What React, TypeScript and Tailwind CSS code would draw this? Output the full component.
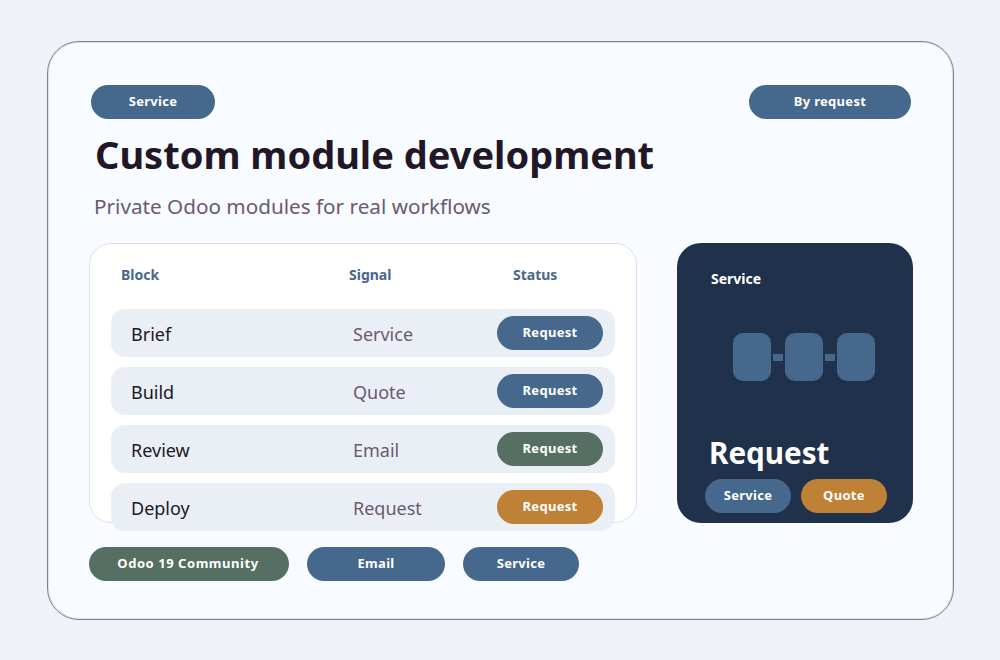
const font = "font-['Noto_Sans','Open_Sans',sans-serif]";

const rows = [
  { block: "Brief", signal: "Service", color: "bg-[#46688c]" },
  { block: "Build", signal: "Quote", color: "bg-[#46688c]" },
  { block: "Review", signal: "Email", color: "bg-[#556f62]" },
  { block: "Deploy", signal: "Request", color: "bg-[#bf8135]" },
];

const Pill = ({ label, className }: { label: string; className: string }) => (
  <div
    className={`flex h-[34px] items-center justify-center rounded-full text-[13px] font-bold tracking-[0.3px] text-white ${className}`}
  >
    {label}
  </div>
);

const App = () => {
  return (
    <div className={`h-[660px] w-[1000px] overflow-hidden bg-[#eff3f7] pt-[41px] pl-[47px] ${font}`}>
      <div className="h-[579px] w-[907px] rounded-[32px] border border-[#857d92] bg-[#f8fbff] pt-[43px] pl-[41px] shadow-[inset_0_0_0_1px_#e3dfea]">
        <div className="flex w-[822px] items-center justify-between pl-[2px]">
          <Pill label="Service" className="w-[124px] bg-[#46688c]" />
          <Pill label="By request" className="w-[162px] bg-[#46688c]" />
        </div>

        <h1 className="mt-[5px] pl-[6px] text-[38px] leading-[60px] font-bold text-[#211726]">
          Custom module development
        </h1>
        <p className="mt-[7px] pl-[5px] text-[20.7px] leading-[30px] text-[#6a5a70]">
          Private Odoo modules for real workflows
        </p>

        <div className="mt-[22px] flex gap-[40px]">
          <div className="h-[280px] w-[548px] rounded-[22px] border border-[#e3dfea] bg-white pl-[21px]">
            <div className="mb-[5px] flex h-[60px] items-center text-[14px] font-bold text-[#46688c]">
              <div className="w-[228px] pl-[10px]">Block</div>
              <div className="w-[164px] pl-[10px]">Signal</div>
              <div className="pl-[10px]">Status</div>
            </div>
            <div className="flex flex-col gap-[10px]">
              {rows.map((row) => (
                <div
                  key={row.block}
                  className="flex h-[48px] w-[504px] items-center rounded-[14px] bg-[#eaeff6] pl-[20px]"
                >
                  <div className="w-[222px] pt-[2px] text-[18px] text-[#211726]">{row.block}</div>
                  <div className="w-[144px] pt-[2px] text-[18px] text-[#6a5a70]">{row.signal}</div>
                  <Pill label="Request" className={`w-[106px] ${row.color}`} />
                </div>
              ))}
            </div>
          </div>

          <div className="flex h-[280px] w-[236px] flex-col rounded-[24px] bg-[#20324b] pl-[28px]">
            <div className="pt-[26px] pl-[6px] text-[14px] leading-[20px] font-bold text-white">Service</div>
            <div className="mt-[44px] flex items-center pl-[28px]">
              <div className="h-[48px] w-[38px] rounded-[10px] bg-[#46688c]" />
              <div className="mx-[2px] h-[7px] w-[10px] bg-[#46688c]" />
              <div className="h-[48px] w-[38px] rounded-[10px] bg-[#46688c]" />
              <div className="mx-[2px] h-[7px] w-[10px] bg-[#46688c]" />
              <div className="h-[48px] w-[38px] rounded-[10px] bg-[#46688c]" />
            </div>
            <div className="mt-[52px] pl-[4px] text-[29.6px] leading-[40px] font-bold text-white">Request</div>
            <div className="mt-[6px] flex gap-[10px]">
              <Pill label="Service" className="w-[86px] bg-[#46688c]" />
              <Pill label="Quote" className="w-[86px] bg-[#bf8135]" />
            </div>
          </div>
        </div>

        <div className="mt-[24px] flex gap-[18px]">
          <Pill label="Odoo 19 Community" className="w-[200px] bg-[#556f62] pr-[2px] tracking-[0.55px]" />
          <Pill label="Email" className="w-[138px] bg-[#46688c]" />
          <Pill label="Service" className="w-[116px] bg-[#46688c]" />
        </div>
      </div>
    </div>
  );
};

export default App;
